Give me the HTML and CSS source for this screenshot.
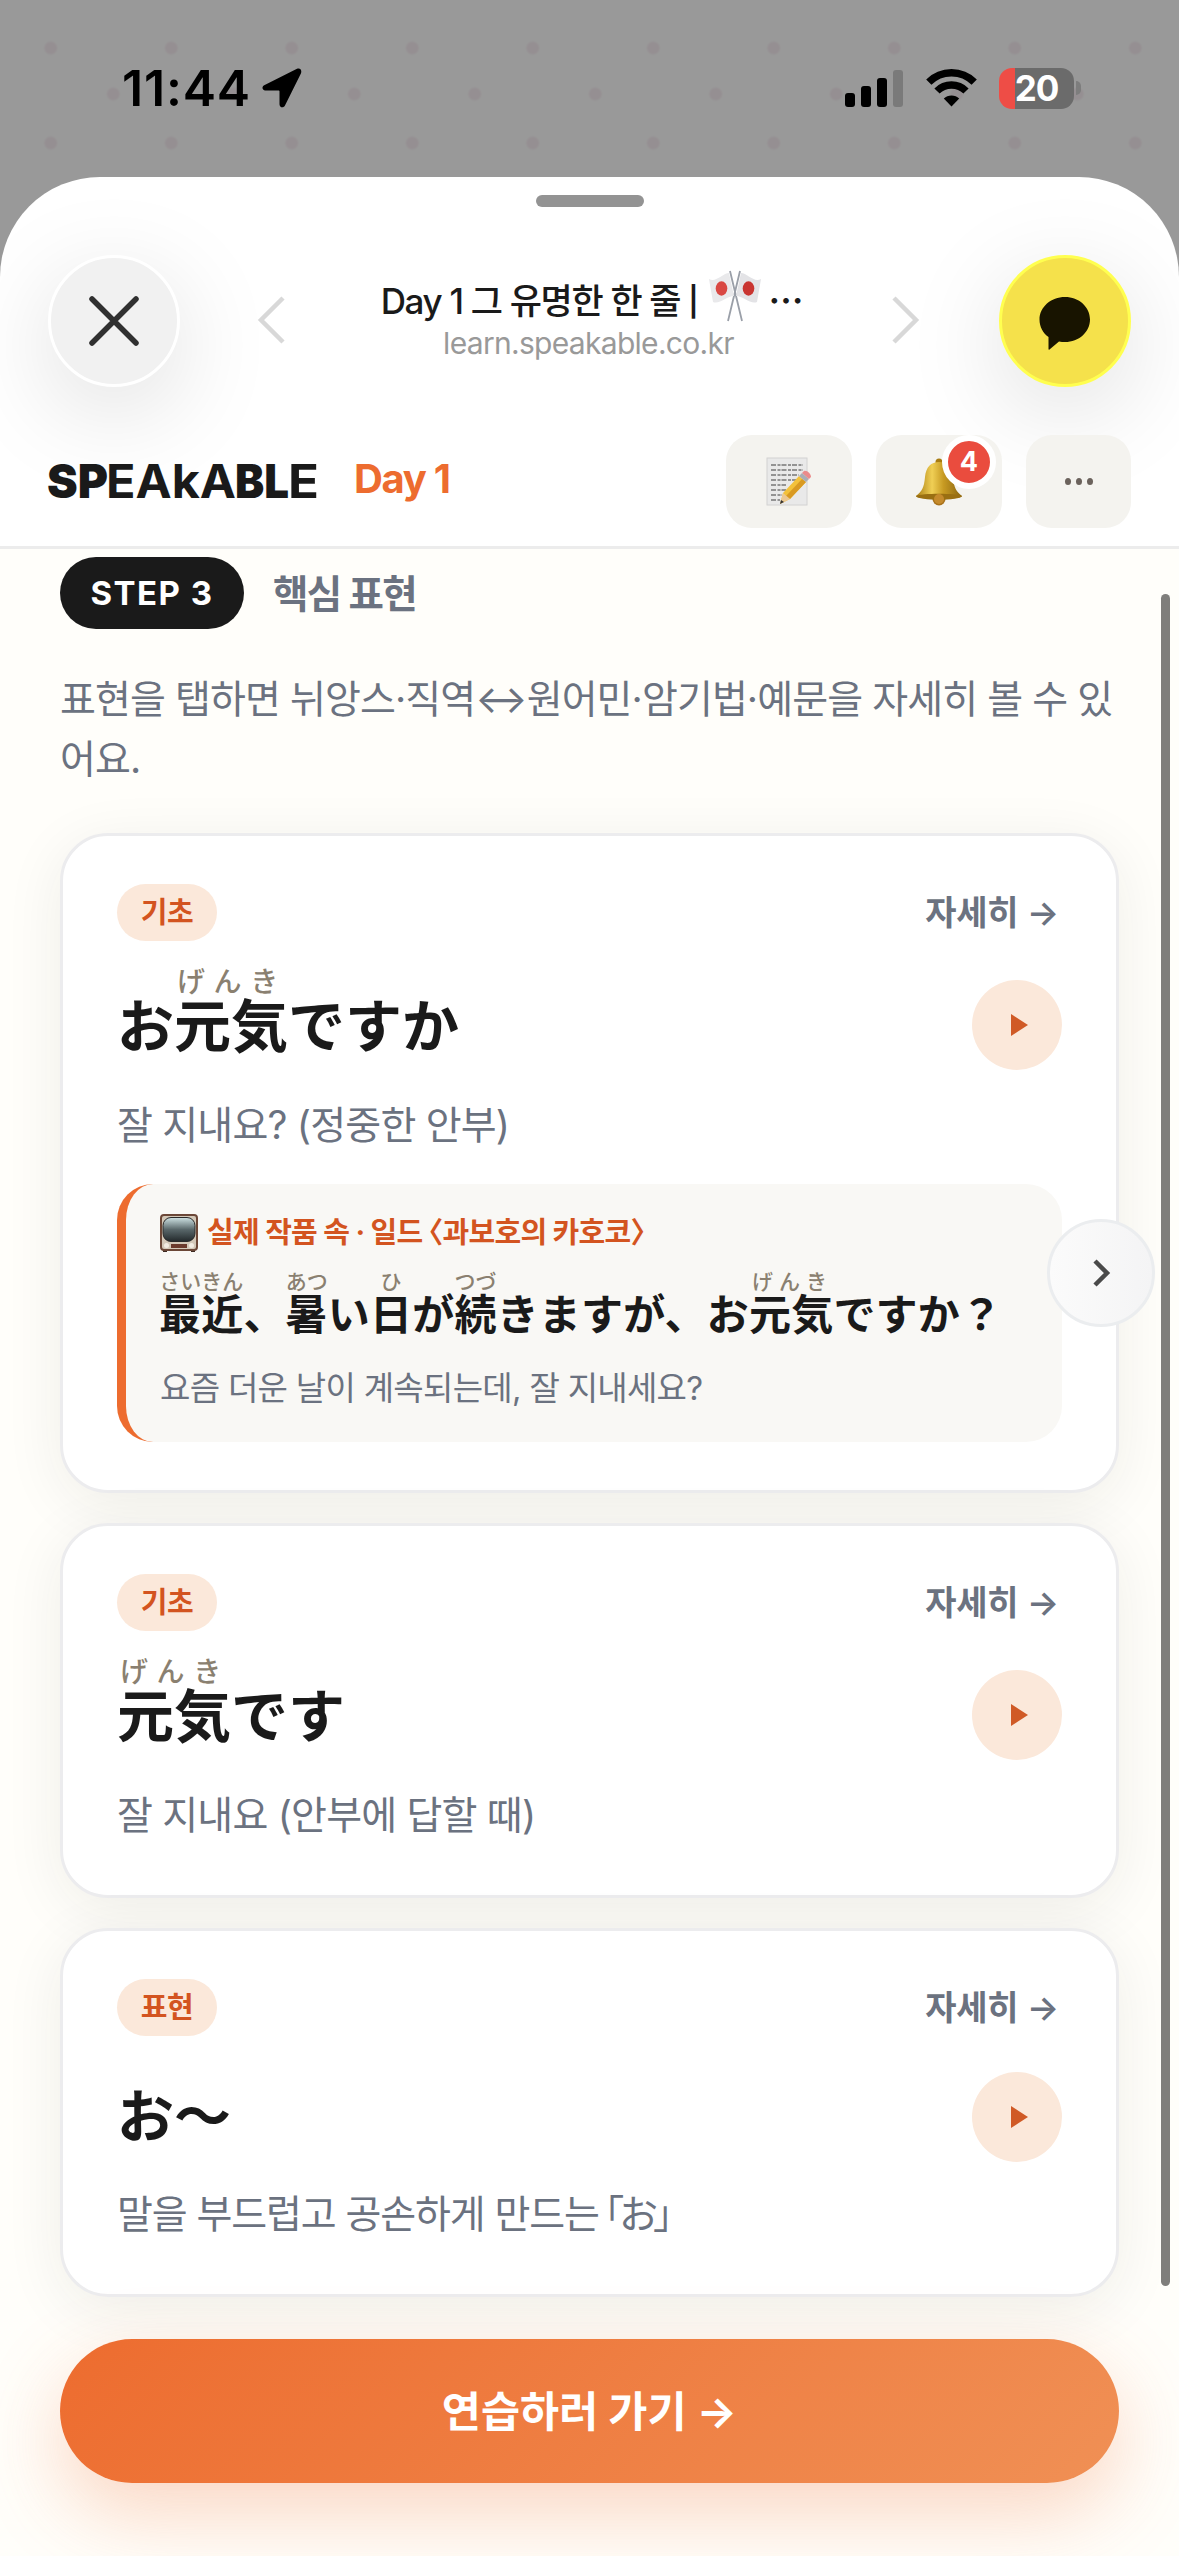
FILE: index.html
```html
<!DOCTYPE html>
<html lang="ko">
<head>
<meta charset="utf-8">
<title>Day 1 그 유명한 한 줄</title>
<link rel="stylesheet" href="styles.css">
</head>
<body>
<div class="screen">
  <div class="status">
    <div class="status-left">
      <span class="time">11:44</span>
      <svg class="loc" width="40" height="40" viewBox="0 0 40 40"><path d="M35 .8 2.200 17.200C-.6 18.600.2 22.500 3.200 22.500H16.500c.6 0 1 .4 1 1v12.700c0 3.600 4.200 4.200 5.600 1L38.900 5.500C40.200 2 38 -.6 35 .8Z"/></svg>
    </div>
    <div class="status-right">
      <svg width="58" height="37" viewBox="0 0 58 37"><rect y="23" width="10" height="14" rx="3"/><rect x="16" y="16" width="10" height="21" rx="3"/><rect x="32" y="8" width="10" height="29" rx="3"/><rect x="48" width="10" height="37" rx="3" fill="#7a7a7a"/></svg>
      <svg class="wifi" width="51" height="38" viewBox="0 0 51 38"><g fill="none" stroke="#000" stroke-width="7.400"><path d="M2.800 13.200a32 32 0 0 1 45.400 0"/><path d="M11 22a20.500 20.500 0 0 1 29 0"/></g><path d="M25.500 37.500 17.800 29.600a11 11 0 0 1 15.400 0Z"/></svg>
      <div class="battery"><span>20</span></div><i class="nub"></i>
    </div>
  </div>

  <div class="sheet">
    <div class="handle"></div>
    <div class="browser">
      <div class="round close"><svg width="56" height="56" viewBox="0 0 56 56"><path d="M6 6 50 50M50 6 6 50" stroke="#303030" stroke-width="5.500" stroke-linecap="round"/></svg></div>
      <svg class="nav" width="28" height="48" viewBox="0 0 28 48"><path d="M26 2 4 24 26 46" fill="none" stroke="#d8d8d8" stroke-width="4.500"/></svg>
      <div class="page">
        <div class="page-title"><span class="pt">Day 1 그 유명한 한 줄 <span class="bar">|</span></span>
          <svg width="54" height="54" viewBox="0 0 54 54"><g stroke="#9a9fa8" stroke-width="1.800"><path d="M22 2 34 52M32 2 20 52"/></g><path d="M1 10c7 4 14-6 20-6l5 23c-7 0-15 9-21 6Z" fill="#e9e9eb"/><path d="M53 10c-7 4-14-6-20-6l-5 23c7 0 15 9 21 6Z" fill="#e3e3e6"/><ellipse cx="13.500" cy="19.500" rx="5.800" ry="7.200" fill="#d94843"/><ellipse cx="40.500" cy="19.500" rx="5.800" ry="7.200" fill="#c93531"/></svg>
          <span class="ell">⋯</span></div>
        <div class="page-url">learn.speakable.co.kr</div>
      </div>
      <svg class="nav" width="28" height="48" viewBox="0 0 28 48"><path d="M2 2 24 24 2 46" fill="none" stroke="#d8d8d8" stroke-width="4.500"/></svg>
      <div class="round kakao"><svg width="52" height="54" viewBox="0 0 52 54"><path d="M26 0C40 0 51 10 51 22.500S40 45 26 45c-2 0-4-.2-6-.6L10.500 52.500c-.6.400-1 .2-1-.6V40C4 36 .5 30 .5 22.500.5 10 12 0 26 0Z" fill="#181400"/></svg></div>
    </div>

    <header class="apphead">
      <svg class="logo" width="274" height="44" viewBox="0 0 274 44"><g class="logo-heavy"><text y="37.500" x="-1" textLength="61" lengthAdjust="spacingAndGlyphs">SP</text><text y="37.500" x="187" textLength="54" lengthAdjust="spacingAndGlyphs">BL</text></g><g class="logo-light"><text y="37.500" x="58" textLength="130" lengthAdjust="spacingAndGlyphs">EAkA</text><text y="37.500" x="240" textLength="31" lengthAdjust="spacingAndGlyphs">E</text></g></svg>
      <span class="day">Day 1</span>
      <div class="tools">
        <div class="tool"><svg width="46" height="50" viewBox="0 0 46 50"><rect x="1" y="1" width="40" height="47" fill="#e9e9e9" stroke="#d2d2d2"/><g stroke="#777" stroke-width="1.300" stroke-dasharray="5 1.500 3 1"><path d="M5 8H37M5 13H37M5 18H33M5 23H30M5 28H20M5 33H20M5 38H16M5 43H14"/></g><path d="M14 47 17 36 33 19 40 25 24 42Z" fill="#f3c13a"/><path d="M20 39 36 22l4 3L24 42Z" fill="#d99a22"/><path d="m33 19 3-3 7 6-3 3Z" fill="#a9adb5"/><path d="m36 16 2-2c3-1 7 3 7 6l-2 2Z" fill="#ea8b8b"/><path d="m14 47 3-11 7 6Z" fill="#ecc893"/><path d="m14 47 1-4 3 2Z" fill="#333"/></svg></div>
        <div class="tool bell"><svg width="48" height="48" viewBox="0 0 48 48"><defs><linearGradient id="gold"><stop stop-color="#a87c12"/><stop offset=".35" stop-color="#f0cf55"/><stop offset=".6" stop-color="#c79a22"/><stop offset="1" stop-color="#8a640f"/></linearGradient></defs><circle cx="24" cy="4" r="3.500" fill="#a87c12"/><circle cx="24" cy="41" r="6.500" fill="#a8711a"/><path d="M24 4c-8 0-13 5-14 15C9 30 7 33 1 38c-1 4 46 4 46 0-6-5-8-8-9-19C37 9 32 4 24 4Z" fill="url(#gold)"/><path d="M1 38c5-3 41-3 46 0-2 5-44 5-46 0Z" fill="#9a6f12"/><circle cx="24" cy="41" r="5" fill="#c58a2c"/></svg><b class="badge">4</b></div>
        <div class="tool more"><i></i><i></i><i></i></div>
      </div>
    </header>

    <main class="content">
      <div class="step"><span class="pill">STEP 3</span><span class="step-name">핵심 표현</span></div>
      <p class="intro">표현을 탭하면 뉘앙스·직역↔원어민·암기법·예문을 자세히 볼 수 있<br>어요.</p>

      <section class="card">
        <div class="top"><span class="tag">기초</span><span class="more-link">자세히 <span class="ar">→</span></span></div>
        <div class="phrase"><div class="jp" lang="ja">お<ruby>元気<rt>げんき</rt></ruby>ですか</div><div class="play"></div></div>
        <div class="meaning">잘 지내요? (정중한 안부)</div>
        <div class="quote">
          <div class="src"><svg width="38" height="38" viewBox="0 0 38 38"><defs><linearGradient id="tube" x2="0" y2="1"><stop stop-color="#cfe3e4"/><stop offset=".5" stop-color="#59676a"/><stop offset="1" stop-color="#23292b"/></linearGradient></defs><rect x="3" y="34" width="4" height="4" fill="#3d2a22"/><rect x="31" y="34" width="4" height="4" fill="#3d2a22"/><rect x="1" y="1" width="36" height="35" rx="3" fill="#d3c8b8" stroke="#6b4737" stroke-width="2"/><rect x="3" y="3.500" width="32" height="24" rx="8" fill="url(#tube)" stroke="#2a2a2a"/><rect x="11" y="30" width="16" height="4" fill="#6b3a2c"/><circle cx="6.500" cy="31.500" r="2.500" fill="#f2ece2"/><circle cx="31.500" cy="31.500" r="2.500" fill="#f2ece2"/></svg><span>실제 작품 속 · 일드 <span class="br">〈</span>과보호의 카호코<span class="br">〉</span></span></div>
          <div class="jp small" lang="ja"><ruby>最近<rt class="k">さいきん</rt></ruby>、<ruby>暑<rt class="k">あつ</rt></ruby>い<ruby>日<rt class="k">ひ</rt></ruby>が<ruby>続<rt class="k">つづ</rt></ruby>きますが、お<ruby>元気<rt>げんき</rt></ruby>ですか？</div>
          <div class="qko">요즘 더운 날이 계속되는데, 잘 지내세요?</div>
        </div>
      </section>

      <section class="card">
        <div class="top"><span class="tag">기초</span><span class="more-link">자세히 <span class="ar">→</span></span></div>
        <div class="phrase"><div class="jp" lang="ja"><ruby>元気<rt>げんき</rt></ruby>です</div><div class="play"></div></div>
        <div class="meaning">잘 지내요 (안부에 답할 때)</div>
      </section>

      <section class="card">
        <div class="top"><span class="tag">표현</span><span class="more-link">자세히 <span class="ar">→</span></span></div>
        <div class="phrase plain"><div class="jp" lang="ja">お〜</div><div class="play"></div></div>
        <div class="meaning particle">말을 부드럽고 공손하게 만드는 <span class="br">「</span>お<span class="br">」</span></div>
      </section>

      <div class="cta"><span>연습하러 가기 <span class="ar">→</span></span></div>
    </main>
  </div>
  <div class="next"><svg width="20" height="30" viewBox="0 0 20 30"><path d="M4 3 16 15 4 27" fill="none" stroke="#4a4a4a" stroke-width="4.500"/></svg></div>
  <div class="scrollbar"></div>
</div>
</body>
</html>
```
FILE: styles.css
```css
* { box-sizing: border-box; }
body { margin: 0; font-family: Inter, "Noto Sans CJK KR", sans-serif; color: #1a1a1a; }
svg { display: block; flex: none; }
.screen {
  position: relative; width: 1179px; height: 2556px; overflow: hidden;
  background-color: #999;
  background-image: radial-gradient(circle, #958f92 5px, transparent 7.5px), radial-gradient(circle, #958f92 5px, transparent 7.5px);
  background-size: 120.5px 95px;
  background-position: -9.500px 0.500px, 53px 46.500px;
}
.status { height: 177px; padding: 67px 98px 0 122px; display: flex; justify-content: space-between; background: linear-gradient(#999 0, #999 38px, transparent 38px); }
.status-left { display: flex; align-items: center; height: 42px; gap: 12px; }
.time { font-size: 50px; font-weight: 600; letter-spacing: .8px; line-height: 42px; width: 128px; white-space: nowrap; color: #000; }
.status-right { display: flex; align-items: center; height: 42px; }
.wifi { margin: 0 22px 0 23px; }
.battery { width: 75px; height: 41px; border-radius: 13px; background: linear-gradient(90deg, #ee4d46 16px, #6b6b6b 16px); color: #fff; font-size: 35px; font-weight: 700; line-height: 41px; text-align: center; letter-spacing: -1px; }
.nub { width: 5px; height: 14px; border-radius: 0 5px 5px 0; background: #7d7d7d; margin-left: 2px; }

.sheet { height: 2379px; border-radius: 100px 100px 0 0; background: #fff; overflow: hidden; display: flex; flex-direction: column; }
.handle { width: 108px; height: 12px; border-radius: 6px; background: #939393; margin: 18px auto 0; flex: none; }
.browser { height: 217px; margin-top: 18px; padding: 30px 48px 0; display: flex; flex: none; align-items: flex-start; }
.round { width: 132px; height: 132px; border-radius: 50%; flex: none; display: flex; align-items: center; justify-content: center; box-shadow: 0 24px 100px rgba(0,0,0,.13); }
.close { background: #f1f1f1; border: 3px solid #fff; }
.kakao { background: #f5e14b; border: 3px solid #ffff50; margin-left: auto; }
.kakao svg { margin-top: 5px; }
.nav { margin-top: 41px; }
.close + .nav { margin-left: 77px; }
.page { width: 607px; height: 132px; padding-top: 14px; text-align: center; }
.page-title { height: 58px; display: flex; align-items: center; justify-content: center; font-size: 35px; font-weight: 500; white-space: nowrap; }
.page-title svg { margin: -4px 6px 0 11px; }
.pt { letter-spacing: -1.300px; }
.bar { font-size: 29px; vertical-align: 2px; font-weight: 600; }
.ell { width: 28px; letter-spacing: 0; font-weight: 700; }
.page-url { color: #999; font-size: 30px; line-height: 32px; letter-spacing: -.7px; }

.apphead { flex: none; height: 107px; padding: 0 48px; border-bottom: 3px solid #ececec; display: flex; align-items: flex-start; }
.logo { margin-top: 18px; overflow: visible; }
.logo text { font-family: Inter, sans-serif; font-size: 47px; fill: #1a1a1a; }
.logo-heavy text { font-weight: 900; }
.logo-light text { font-weight: 700; }
.day { margin: 13px 0 0 32px; font-size: 40px; line-height: 48px; font-weight: 700; color: #ed6c2f; letter-spacing: -1.300px; }
.tools { margin: -7px 0 0 auto; display: flex; gap: 24px; }
.tool { width: 126px; height: 93px; border-radius: 26px; background: #f4f3ef; display: flex; align-items: center; justify-content: center; position: relative; }
.more { width: 105px; gap: 5px; }
.more i { width: 6px; height: 7px; border-radius: 50%; background: #6b625c; }
.badge { position: absolute; left: 66px; top: 0; width: 54px; height: 54px; border: 6px solid #fff; border-radius: 50%; background: #ea4c3e; color: #fff; font-size: 27px; line-height: 42px; text-align: center; }

.content { flex: 1; background: #fffefa; padding: 8px 60px 0; }
.step { display: flex; align-items: center; gap: 30px; height: 72px; }
.pill { width: 184px; height: 72px; border-radius: 36px; background: #1a1a1a; color: #fff; font-size: 33px; font-weight: 700; line-height: 72px; text-align: center; letter-spacing: 1.500px; }
.step-name { color: #6b7280; font-size: 38.500px; font-weight: 600; letter-spacing: -1.700px; padding-bottom: 5px; margin-left: -1px; }
.intro { margin: 40px 0 44px; height: 120px; color: #6b7280; font-size: 39px; line-height: 60px; white-space: nowrap; letter-spacing: -.9px; }
.card { border: 3px solid #ececee; border-radius: 48px; background: #fff; padding: 48px 54px; margin-bottom: 30px; box-shadow: 0 12px 60px rgba(40,36,20,.075); }
.top { height: 57px; display: flex; align-items: center; justify-content: space-between; }
.tag { width: 100px; height: 57px; border-radius: 29px; background: #fbe8da; color: #d35420; font-size: 29px; font-weight: 700; line-height: 57px; text-align: center; letter-spacing: -.5px; }
.more-link { color: #6b7280; font-size: 34px; font-weight: 600; line-height: 57px; letter-spacing: -.2px; padding-right: 3px; }
.phrase { margin-top: 15px; height: 137px; display: flex; align-items: center; justify-content: space-between; }
.phrase.plain { height: 131px; }
.jp { font-family: "Noto Sans CJK JP", sans-serif; font-weight: 700; font-size: 57px; line-height: 80px; white-space: nowrap; padding-bottom: 6px; }
.plain .jp { padding-bottom: 10px; }
ruby { display: inline-block; position: relative; line-height: 1; }
rt { position: absolute; left: 3px; right: 0; bottom: 100%; text-align: left; font-size: 28px; line-height: 28px; font-weight: 500; color: #8a8070; letter-spacing: 8.600px; }
.play { width: 90px; height: 90px; border-radius: 50%; background: #fbe8da; display: flex; align-items: center; justify-content: center; }
.play::before { content: ""; margin-left: 4px; border-left: 17px solid #d05a26; border-top: 11px solid transparent; border-bottom: 11px solid transparent; }
.meaning { height: 64px; line-height: 64px; font-size: 39px; color: #6b7280; white-space: nowrap; letter-spacing: -.8px; }
.particle { letter-spacing: -1.100px; }
.particle .br { margin: 0 -4px; }
.quote { margin-top: 27px; height: 258px; border-left: 9px solid #ed6c2f; border-radius: 36px; background: #f9f8f5; padding: 29px 0 0 34px; }
.src { display: flex; align-items: center; gap: 9px; height: 40px; font-size: 29px; line-height: 38px; font-weight: 700; color: #d35420; white-space: nowrap; letter-spacing: -.7px; }
.br { font-family: "Noto Sans CJK KR", sans-serif; font-feature-settings: "halt"; line-height: 0; }
.small { font-size: 42px; line-height: 64px; margin: 27px 0 0 -1px; padding-bottom: 0; letter-spacing: .2px; }
.small rt { font-size: 21px; line-height: 21px; letter-spacing: 6px; left: 3px; }
.small rt.k { letter-spacing: 0; left: 0; text-align: center; white-space: nowrap; }
.qko { margin-top: 19px; line-height: 50px; font-size: 33px; color: #6b7280; letter-spacing: -.7px; }
.cta { margin-top: 42px; height: 144px; padding-bottom: 5px; border-radius: 72px; background: linear-gradient(135deg, #ed6c2f, #f09055); box-shadow: 0 30px 80px rgba(237,108,47,.27); color: #fff; font-size: 42.500px; font-weight: 700; display: flex; align-items: center; justify-content: center; }
.next { position: absolute; left: 1047px; top: 1219px; width: 108px; height: 108px; border: 3px solid #ebedef; border-radius: 50%; background: linear-gradient(90deg, #fbfbfb, #f4f4f5); display: flex; align-items: center; justify-content: center; }
.scrollbar { position: absolute; left: 1161px; top: 594px; width: 9px; height: 1692px; border-radius: 5px; background: #7f7e7b; }
```
